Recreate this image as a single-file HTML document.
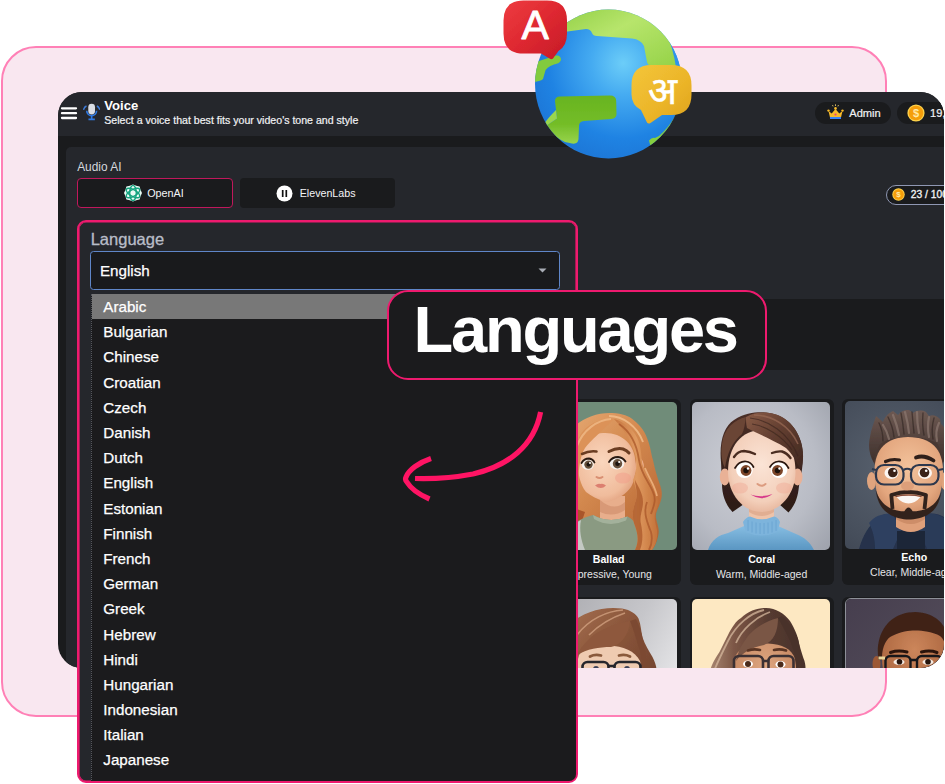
<!DOCTYPE html>
<html lang="en">
<head>
<meta charset="utf-8">
<title>Languages</title>
<style>
*{box-sizing:border-box;margin:0;padding:0}
html,body{width:945px;height:784px;overflow:hidden;background:#fff}
body{position:relative;font-family:"Liberation Sans",sans-serif;color:#fff}
.abs{position:absolute}
#pinkcard{left:.5px;top:46px;width:886.1px;height:671.2px;border:2px solid #ff80b6;border-radius:35px;background:#f9e7f0}
#win{left:58.3px;top:92.3px;width:885.4px;height:576px;border-radius:24px;background:#1a1b1d;overflow:hidden}
#hdr{left:0;top:0;width:100%;height:44px;background:#25272c}
#panel{left:7.9px;top:54.8px;width:900px;height:560px;border-radius:5px;background:#25272c}
.t{position:absolute;white-space:nowrap;line-height:1}
.pill{position:absolute;border-radius:12px;background:#1a1b1d}
.btn{position:absolute;height:30px;border-radius:4px;background:#1a1b1d}
#band{left:300px;top:151.5px;width:600px;height:71.5px;background:#1a1b1d}
.card{position:absolute;width:144px;height:186px;border-radius:6px;background:#1a1b1d}
.card .img{position:absolute;left:3px;top:3px;width:138px;height:148px;border-radius:5px;overflow:hidden}
.card .nm{position:absolute;left:0;width:100%;text-align:center;top:153.5px;font-weight:700;font-size:10.6px;line-height:12px;color:#fff}
.card .ds{position:absolute;left:-10px;right:-10px;text-align:center;top:168.5px;font-size:10.5px;line-height:12px;color:#e4e5e8;white-space:nowrap}
#lang{left:77.2px;top:220.2px;width:500.6px;height:563.2px;border:2px solid #ee1a6e;box-shadow:inset 0 0 0 .6px #ee1a6e;border-radius:9px;background:#25272c;overflow:hidden}
#sel{left:11.1px;top:28.6px;width:469.6px;height:39.5px;border:1.9px solid #5f86c8;border-radius:3.5px;background:#191a1c}
#list{left:12.1px;top:71.9px;width:490px;height:500px;background:#1b1b1d;border-left:1px dotted #55585e}
#list div{height:25.2px;line-height:25.2px;padding-left:11px;font-size:15.2px;color:#fff;white-space:nowrap;-webkit-text-stroke:.25px #fff}
#list div.hl{background:#787878}
#badge{left:387px;top:290px;width:380px;height:90px;border:2px solid #ee1a6e;border-radius:21px;background:#1b1b1d}
#badge span{position:absolute;left:24.5px;top:1.5px;font-weight:700;font-size:65px;line-height:72px;letter-spacing:-2.2px;white-space:nowrap;color:#fff}
</style>
</head>
<body>
<div id="pinkcard" class="abs"></div>

<div id="win" class="abs">
  <div id="hdr" class="abs">
    <svg class="abs" style="left:2px;top:12.700px" width="19" height="16" viewBox="0 0 19 16"><g stroke="#fff" stroke-width="2.300" stroke-linecap="round"><path d="M2 3.300h14M2 8.200h14M2 13h14"/></g></svg>
    <svg class="abs" style="left:24.300px;top:11px" width="17.300" height="19" viewBox="0 0 20 22"><path d="M.500 8q1-3.500 3.500-4.500M19.500 8q-1-3.500-3.500-4.500" stroke="#3d7bd9" stroke-width="1.700" fill="none"/><path d="M4.300 9a5.700 5.700 0 0 0 11.400 0" fill="none" stroke="#2f78e0" stroke-width="1.900"/><path d="M10 14.500v4M6.300 19h7.400" stroke="#2f78e0" stroke-width="1.900"/><rect x="6.100" y="1" width="7.800" height="12.200" rx="3.900" fill="#d9dde4"/></svg>
    <span class="t" style="left:46px;top:7px;font-size:13.1px;font-weight:700">Voice</span>
    <span class="t" style="left:46px;top:23px;font-size:10.6px;color:#f1f2f4;-webkit-text-stroke:.2px #f1f2f4">Select a voice that best fits your video's tone and style</span>
    <div class="pill" style="left:756.5px;top:10px;width:76.5px;height:22px">
      <svg class="abs" style="left:11px;top:2px" width="19" height="17" viewBox="0 0 19 17"><path d="M2.5 7l3.2 2.6L9.5 5l3.8 4.6L16.500 7l-1.6 7H4.100z" fill="#f7b928"/><path d="M4 13h11v2H4z" fill="#3b82f6"/><circle cx="9.500" cy="10.500" r="1.100" fill="#ec3f7a"/><circle cx="2.5" cy="6.6" r="1.2" fill="#f7b928"/><circle cx="9.500" cy="4.400" r="1.3" fill="#f7b928"/><circle cx="16.500" cy="6.600" r="1.200" fill="#f7b928"/><path d="M9.5 0.300v1.700M6.500 1l.6 1.400M12.500 1l-.6 1.400" stroke="#f7d774" stroke-width=".8"/></svg>
      <span class="t" style="left:34.500px;top:5.500px;font-size:11.100px;color:#f1f2f4;-webkit-text-stroke:.2px #f1f2f4">Admin</span>
    </div>
    <div class="pill" style="left:838.500px;top:10px;width:76px;height:22px">
      <svg class="abs" style="left:10.400px;top:2.100px" width="18" height="18" viewBox="0 0 18 18"><circle cx="9" cy="9" r="8.600" fill="#fcd34d"/><circle cx="9" cy="9" r="7.300" fill="#f59e0b"/><text x="9" y="13" font-size="11" font-weight="700" text-anchor="middle" fill="#ffe9a6" font-family="Liberation Sans, sans-serif">$</text></svg>
      <span class="t" style="left:33.200px;top:5.500px;font-size:11.100px;color:#f1f2f4;-webkit-text-stroke:.2px #f1f2f4">19,500</span>
    </div>
  </div>
  <div id="panel" class="abs">
    <span class="t" style="left:11px;top:15.200px;font-size:11.900px;color:#d5d8de">Audio AI</span>
    <div class="btn" style="left:11px;top:31px;width:155.500px;border:1px solid #c0185c">
      <svg class="abs" style="left:46px;top:5.200px" width="18" height="18" viewBox="0 0 18 18"><path d="M9 .5l3.200 1.200 3.400 .800 .900 3.300 1.500 3.200-1.500 3.200-.900 3.300-3.400 .800L9 17.500l-3.200-1.200-3.400-.800-.900-3.300L0 9l1.500-3.200 .900-3.300 3.400-.800z" fill="#e9faf4"/><g fill="none" stroke="#14a37f" stroke-width="1.400"><ellipse cx="9" cy="9" rx="3.300" ry="7.600"/><ellipse cx="9" cy="9" rx="3.300" ry="7.600" transform="rotate(60 9 9)"/><ellipse cx="9" cy="9" rx="3.300" ry="7.600" transform="rotate(120 9 9)"/></g></svg>
      <span class="t" style="left:69px;top:9px;font-size:10.800px;color:#f4f5f7">OpenAI</span>
    </div>
    <div class="btn" style="left:173.500px;top:31px;width:155px">
      <svg class="abs" style="left:36.500px;top:6.500px" width="17" height="17" viewBox="0 0 17 17"><circle cx="8.500" cy="8.500" r="8" fill="#fff"/><path d="M6.700 5v7M10.300 5v7" stroke="#111" stroke-width="1.700"/></svg>
      <span class="t" style="left:60px;top:9.500px;font-size:10.700px;color:#f4f5f7">ElevenLabs</span>
    </div>
    <div class="pill" style="left:820px;top:38px;width:90px;height:19.500px;border:1px solid #8f97b3;border-radius:10px;background:#1a1b1d">
      <svg class="abs" style="left:5px;top:2px" width="13" height="13" viewBox="0 0 18 18"><circle cx="9" cy="9" r="8.600" fill="#fcd34d"/><circle cx="9" cy="9" r="7.300" fill="#f59e0b"/><text x="9" y="13" font-size="11" font-weight="700" text-anchor="middle" fill="#ffe9a6" font-family="Liberation Sans, sans-serif">$</text></svg>
      <span class="t" style="left:23.500px;top:4.300px;font-size:10.300px;color:#f4f5f7;-webkit-text-stroke:.3px #f4f5f7">23 / 100</span>
    </div>
    <div id="band" class="abs"></div>
    <div id="cards">
      <!-- Ballad -->
      <div class="card" style="left:470.500px;top:252px">
        <div class="img" style="left:2.700px;top:2.500px"><svg width="138" height="148" viewBox="0 0 138 148">
          <defs>
            <linearGradient id="bh" x1="0" y1="0" x2="1" y2="1"><stop offset="0" stop-color="#eab07a"/><stop offset=".45" stop-color="#d48a50"/><stop offset="1" stop-color="#b2602f"/></linearGradient>
            <linearGradient id="bh2" x1="0" y1="0" x2="1" y2="0"><stop offset="0" stop-color="#c67640"/><stop offset=".5" stop-color="#e09a60"/><stop offset="1" stop-color="#c27038"/></linearGradient>
            <radialGradient id="bf" cx=".42" cy=".42" r=".7"><stop offset="0" stop-color="#fad6bd"/><stop offset=".7" stop-color="#f0bc9c"/><stop offset="1" stop-color="#dc9673"/></radialGradient>
            <filter id="sb"><feGaussianBlur stdDeviation="0.55"/></filter>
          </defs>
          <rect width="138" height="148" fill="#708c79"/>
          <g filter="url(#sb)">
          <!-- back hair -->
          <path d="M14 148C6 120 8 84 16 56C24 28 46 10 73 11C84 11.500 90 14 94.500 18C102 24 106 30 108 36C112 46 112 52 114 58C116 68 118 74 120 80C123 88 123.500 92 122 98C120 106 116 110 117 116C118 122 120.500 126 119.500 132C118 140 116 144 113 148z" fill="url(#bh)"/>
          <path d="M18 100C22 116 30 124 40 128L46 110z" fill="#a9572a"/>
          <!-- neck -->
          <path d="M61 94h25v24q-12 7-25 0z" fill="#e8ae8c"/>
          <path d="M61 98q14 12 25 2v8q-12 8-25 2z" fill="#d08e6c" opacity=".65"/>
          <!-- sweater -->
          <path d="M20 148C22 128 36 118 54 113Q70 122 88.500 114.500C96 118 100 126 101.500 134L103.500 148z" fill="#8a9a82"/>
          <path d="M20 148C21 134 30 124 42 118C40 128 42 138 46 148z" fill="#c3c9c3"/>
          <path d="M54 113Q70 122 88.500 114.500L87 118.500Q70 126 55 117z" fill="#a3b19b"/>
          <!-- ear -->
          <ellipse cx="100.500" cy="66" rx="4.500" ry="10" fill="#eeb08e"/>
          <!-- face -->
          <path d="M39 62C39 44 48 32 64 31C82 30 96 42 96.500 60C97 72 95 80 92 85C87 92 80 96 74 98C70 100 67 100.500 64 99C58 97 52 94 47 90C41 82 39 72 39 62z" fill="url(#bf)"/>
          <ellipse cx="84" cy="76" rx="8" ry="5.500" fill="#f19a88" opacity=".45"/>
          <!-- front hair left -->
          <path d="M75 17C62 16 48 22 42 32C36 42 32 56 30 70C29 80 26 90 22 98C30 96 36 88 39 78C40 66 41 54 46 46C52 38 62 30 75 17z" fill="#dc9258"/>
          <!-- front hair right, wavy -->
          <path d="M75 17C86 20 96 28 100 40C103 50 102 58 104 64C108 72 112 78 116 84C120 92 121 98 118 106C114 114 116 120 118 128C119 138 116 144 113 148L96 148C100 140 99 132 96 124C92 114 94 106 97 98C99 90 96 84 94 78C98 70 98 60 96 52C92 40 86 28 75 17z" fill="url(#bh2)"/>
          <path d="M96 78C100 86 104 92 104 100C104 108 100 114 102 122C104 132 104 140 101 148L96 148C100 140 99 132 96 124C92 114 94 106 97 98C99 90 96 84 96 78z" fill="#a9572a" opacity=".75"/><path d="M80 22C92 30 98 44 100 58C102 72 110 80 114 90C118 98 114 106 112 112M108 100C104 110 108 120 112 130C114 138 112 144 110 148" stroke="#a9572a" stroke-width="1.800" fill="none" opacity=".75"/><path d="M106 66C110 76 116 84 118 94" stroke="#f0b884" stroke-width="1.800" fill="none" opacity=".8"/>
          <path d="M70 14C84 14 98 24 104 40" stroke="#f2c08e" stroke-width="2" fill="none" opacity=".8"/>
          <path d="M72 17C58 18 44 28 38 44" stroke="#f2c08e" stroke-width="2" fill="none" opacity=".7"/>
          </g>
          <path d="M43 52Q50 48.500 57.500 49.500" stroke="#6b3d22" stroke-width="2.600" fill="none" stroke-linecap="round"/>
          <path d="M70 49.500Q78 45.500 84 47Q88 48.500 90 51" stroke="#6b3d22" stroke-width="3" fill="none" stroke-linecap="round"/>
          <ellipse cx="48.800" cy="62.500" rx="6" ry="5.300" fill="#f7f2ee"/><circle cx="49.500" cy="62.600" r="4.200" fill="#66503c"/><circle cx="49.500" cy="62.600" r="2" fill="#1c1410"/><circle cx="51" cy="61" r="1" fill="#fff"/>
          <ellipse cx="78" cy="61.500" rx="7.300" ry="6" fill="#f7f2ee"/><circle cx="78.500" cy="61.800" r="4.700" fill="#66503c"/><circle cx="78.500" cy="61.800" r="2.300" fill="#1c1410"/><circle cx="80.200" cy="60" r="1.100" fill="#fff"/>
          <path d="M42.500 61Q45 56.500 50 56.500Q54 57 55.500 60.500M70 60Q73 55 79 55Q84 55.500 86.500 59.500" stroke="#2a1a12" stroke-width="1.800" fill="none" stroke-linecap="round"/>
          <path d="M57.500 75q3 2 6 0" stroke="#d98f72" stroke-width="2" fill="none" stroke-linecap="round"/>
          <path d="M56 83.500Q59 81 61.500 82Q64 81 67 83.500Q62 88.500 56 83.500z" fill="#dc7f70"/>
        </svg></div>
        <div class="nm">Ballad</div><div class="ds">Expressive, Young</div>
      </div>
      <!-- Coral -->
      <div class="card" style="left:623.500px;top:252px">
        <div class="img" style="left:2.500px;top:2.500px"><svg width="138" height="148" viewBox="0 0 138 148">
          <defs>
            <radialGradient id="cb" cx=".42" cy=".45" r=".8"><stop offset="0" stop-color="#cdcfd6"/><stop offset=".6" stop-color="#b9bcc5"/><stop offset="1" stop-color="#9da1ab"/></radialGradient>
            <radialGradient id="cf" cx=".5" cy=".42" r=".65"><stop offset="0" stop-color="#fbe4d6"/><stop offset=".7" stop-color="#f3cfba"/><stop offset="1" stop-color="#e3ad92"/></radialGradient>
            <linearGradient id="ch" x1="0" y1="0" x2="1" y2="1"><stop offset="0" stop-color="#8a5c47"/><stop offset=".45" stop-color="#623e30"/><stop offset="1" stop-color="#3e2620"/></linearGradient>
            <linearGradient id="ch2" x1="0" y1="0" x2="0" y2="1"><stop offset="0" stop-color="#4a2e26"/><stop offset="1" stop-color="#2c1b17"/></linearGradient>
            <linearGradient id="cs" x1="0" y1="0" x2="0" y2="1"><stop offset="0" stop-color="#86bde2"/><stop offset="1" stop-color="#5a96c2"/></linearGradient>
          </defs>
          <rect width="138" height="148" fill="url(#cb)"/>
          <g filter="url(#sb)">
          <!-- back hair / bob -->
          <path d="M29 60C27 40 32 24 42 18C54 10 66 10 74 10.500C92 12 104 24 109 40C113 54 110 70 107 84C106 94 104 102 96.500 110.500L87 102L52 102L40.500 110C33 102 30 92 30 82z" fill="url(#ch2)"/>
          <!-- neck -->
          <path d="M57 100h25v20q-12.500 6-25 0z" fill="#eec3a9"/>
          <path d="M57 104q12.500 9 25 0v6q-12.500 8-25 0z" fill="#dba589" opacity=".7"/>
          <!-- sweater -->
          <path d="M16 148C19 138 27 133 36 131L52 124L86 124L104 132C112 135 118 140 122 148z" fill="url(#cs)"/>
          <path d="M51 120Q54 115 58 114.500Q69.500 120 82 114.500Q86 115 88 120L85.500 130Q69.500 137 53.500 130z" fill="#7db4dc"/>
          <path d="M56 118v11M60 119.500v11M64 120.500v11M68 121v11M72 121v11M76 120.500v11M80 119.500v11M84 118v11" stroke="#5f9ccb" stroke-width="1" opacity=".6"/>
          <!-- ears -->
          <ellipse cx="32.800" cy="75" rx="5" ry="8.500" fill="#e9b196"/><ellipse cx="105.500" cy="75" rx="5" ry="8.500" fill="#e9b196"/>
          <!-- face -->
          <path d="M36 70C36 44 50 28 69.500 28C90 28 103.500 44 103.500 70C103.500 92 88 110 69.500 110C51 110 36 92 36 70z" fill="url(#cf)"/>
          <ellipse cx="48" cy="86" rx="8" ry="5.500" fill="#f0a894" opacity=".45"/><ellipse cx="92" cy="86" rx="8" ry="5.500" fill="#f0a894" opacity=".45"/>
          <!-- front hair -->
          <path d="M54 15C42 18 32 26 30 42C28.500 52 30 60 33 66C35 52 40 40 50 32C52 28 53 22 54 15z" fill="#6a4434"/>
          <path d="M54 15C60 11 68 10 74 10.500C94 12 106 26 110 44C112 54 111 62 108.500 68C104 58 100 52 94 46C82 38 66 32 55 26C54 22 54 18 54 15z" fill="url(#ch)"/>
          <path d="M58 16C76 18 96 30 106 54M60 22C74 24 90 34 100 48" stroke="#3e2620" stroke-width="1.200" fill="none" opacity=".7"/>
          <path d="M62 13C80 13 98 24 106 42" stroke="#9a6b55" stroke-width="1.500" fill="none" opacity=".7"/>
          </g>
          <path d="M42 55Q46 49 52 49Q58 49.500 63 52" stroke="#4a2c20" stroke-width="2.400" fill="none" stroke-linecap="round"/>
          <path d="M80 51Q85 49 90 49.500Q95 51 98.500 56" stroke="#4a2c20" stroke-width="2.400" fill="none" stroke-linecap="round"/>
          <ellipse cx="52.500" cy="68" rx="8.300" ry="8" fill="#fff"/><circle cx="54" cy="68.500" r="5.400" fill="#7b4428"/><circle cx="54" cy="68.500" r="2.700" fill="#1c100a"/><circle cx="56" cy="66.500" r="1.200" fill="#fff"/>
          <ellipse cx="87" cy="68" rx="8.300" ry="8" fill="#fff"/><circle cx="85.500" cy="68.500" r="5.400" fill="#7b4428"/><circle cx="85.500" cy="68.500" r="2.700" fill="#1c100a"/><circle cx="87.500" cy="66.500" r="1.200" fill="#fff"/>
          <path d="M43 66Q47 59 54 59.500Q59 60 61.500 65M78 65Q81 60 86 59.500Q93 59 96.500 66" stroke="#2a1710" stroke-width="1.700" fill="none" stroke-linecap="round"/>
          <path d="M65.500 82q4 3.500 8 0" stroke="#dc9c80" stroke-width="2" fill="none" stroke-linecap="round"/>
          <path d="M58.500 92.500Q69.500 96 80.500 92Q70 100 58.500 92.500z" fill="#d63a8a"/>
        </svg></div>
        <div class="nm">Coral</div><div class="ds">Warm, Middle-aged</div>
      </div>
      <!-- Echo -->
      <div class="card" style="left:776px;top:252px">
        <div class="img" style="top:2.300px"><svg width="138" height="148" viewBox="0 0 138 148">
          <defs>
            <radialGradient id="eb" cx=".35" cy=".45" r=".9"><stop offset="0" stop-color="#59626f"/><stop offset=".6" stop-color="#464e5b"/><stop offset="1" stop-color="#363c48"/></radialGradient>
            <radialGradient id="ef" cx=".5" cy=".38" r=".7"><stop offset="0" stop-color="#f3c39c"/><stop offset=".65" stop-color="#e3a67e"/><stop offset="1" stop-color="#c4825c"/></radialGradient>
            <linearGradient id="eh" x1="0" y1="0" x2="0" y2="1"><stop offset="0" stop-color="#6e5a53"/><stop offset="1" stop-color="#3e2f2b"/></linearGradient>
          </defs>
          <rect width="138" height="148" fill="url(#eb)"/>
          <g filter="url(#sb)">
          <!-- hoodie -->
          <path d="M14 148C18 134 24 124 34 116C40 112 46 112 52 114L64 126L78 114C86 111 96 113 102 118C112 126 118 136 122 148z" fill="#25324b"/>
          <path d="M24 122C30 114 40 112 48 113L56 130L48 148L30 148C30 138 28 130 24 122z" fill="#2f4060"/>
          <path d="M104 122C98 114 90 112 82 113L74 130L82 148L100 148C100 138 100 130 104 122z" fill="#2b3a58"/>
          <path d="M52 130h28v18h-28z" fill="#1c2537"/>
          <!-- neck -->
          <path d="M51 108h29v18q-14 10-29 0z" fill="#dfa07a"/>
          <path d="M51 112q14 12 29 0v6q-14 10-29 0z" fill="#c4845f" opacity=".7"/>
          <!-- ears -->
          <ellipse cx="26.500" cy="80" rx="4.500" ry="9" fill="#e0a47e"/><ellipse cx="100" cy="80" rx="4.500" ry="9" fill="#e0a47e"/>
          <ellipse cx="63.500" cy="52" rx="36.500" ry="30" fill="#4a3833"/>
          <!-- face -->
          <path d="M29.500 70C29.500 48 42 36 63 36C86 36 98 48 98 70C98 84 95 96 90 104C84 112 74 117 63.500 117C53 117 43 112 37 104C32 96 29.500 84 29.500 70z" fill="url(#ef)"/>
          <!-- beard -->
          <path d="M30.500 88C32 100 36 108 44 113C50 117 58 118.500 63.500 118.500C70 118.500 78 117 84 113C92 108 95 100 97 88C95 97 90 103 84 106.500C78 110 70 110.500 63.500 110.500C57 110.500 50 110 44 106.500C38 103 33 97 30.500 88z" fill="#33241f"/>
          <path d="M47.500 108L46.300 94Q63.500 88 81 94L79.500 108" stroke="#33241f" stroke-width="3.800" fill="none" stroke-linejoin="round"/>
          <path d="M59 111Q63.500 102 68 111z" fill="#33241f"/>
          <path d="M51.500 96Q63.500 93.500 75.500 96Q70 102.500 63.500 102.500Q57 102.500 51.500 96z" fill="#fbf7f4"/>
          <path d="M50.500 95.500Q63.500 92.500 76.500 95.500" stroke="#6e352c" stroke-width="1.200" fill="none"/>
          <ellipse cx="62.500" cy="85" rx="6.500" ry="4.500" fill="#dd9f7a"/>
          <!-- hair -->
          <path d="M29 62C24 54 23 44 25 36C26 28 29 22 31 15L38 21C40 15 44 12 48 10L53 14C56 10 60 8.500 64 9L68 12C72 9 77 9 81 11L84 15C88 13 92 15 95 18L96 23C100 26 102 32 102 38C103 46 102 54 98 62C97 52 95 46 92 42C84 38 76 36 63 36C50 36 42 38 35 43C32 48 30 54 29 62z" fill="url(#eh)"/>
          <path d="M38 24Q42 30 44 38M48 14Q52 24 54 34M60 11Q63 22 64 32M72 11Q72 22 74 32M84 16Q82 26 84 36M94 22Q90 30 92 40" stroke="#8a766d" stroke-width="2.200" fill="none" opacity=".75" stroke-linecap="round"/>
          <path d="M34 22Q38 30 38 40M43 16Q48 26 49 36M56 12Q58 22 59 33M67 11Q68 22 69 32M78 12Q77 24 79 34M89 17Q86 28 88 38" stroke="#2f2320" stroke-width="1.400" fill="none" opacity=".6" stroke-linecap="round"/>
          </g>
          <path d="M40.500 60.500Q47 57.500 54.500 59" stroke="#2e1f1a" stroke-width="3.200" fill="none" stroke-linecap="round"/>
          <path d="M71 56.500Q79 53.500 88.500 59.500" stroke="#2e1f1a" stroke-width="3.800" fill="none" stroke-linecap="round"/>
          <ellipse cx="46.500" cy="72" rx="7" ry="6" fill="#fbf6f2"/><circle cx="47.800" cy="71.500" r="4.800" fill="#3a2218"/><circle cx="49.500" cy="69.800" r="1.300" fill="#fff"/>
          <ellipse cx="80" cy="72" rx="7" ry="6" fill="#fbf6f2"/><circle cx="79.500" cy="71.500" r="4.800" fill="#3a2218"/><circle cx="81.200" cy="69.800" r="1.300" fill="#fff"/>
          <g fill="none" stroke="#2d384d" stroke-width="2.200"><rect x="31" y="64" width="27.500" height="19.500" rx="8"/><rect x="66" y="64" width="27.500" height="19.500" rx="8"/><path d="M58.500 69Q62.300 66.500 66 69M31 69l-4-1M93.500 69l5-1"/></g>
        </svg></div>
        <div class="nm" style="top:152px">Echo</div><div class="ds" style="top:167px">Clear, Middle-aged</div>
      </div>
      <!-- row 2 -->
      <div class="card" style="left:470.500px;top:449.500px">
        <div class="img" style="left:2.700px;top:2.300px"><svg width="138" height="148" viewBox="0 0 138 148">
          <defs>
            <linearGradient id="r1b" x1="0" y1="0" x2="1" y2=".6"><stop offset="0" stop-color="#a6a6ab"/><stop offset=".6" stop-color="#c6c6ca"/><stop offset="1" stop-color="#e9e9eb"/></linearGradient>
            <linearGradient id="r1h" x1="0" y1="0" x2="1" y2="1"><stop offset="0" stop-color="#ad7654"/><stop offset=".45" stop-color="#875339"/><stop offset="1" stop-color="#603626"/></linearGradient>
          </defs>
          <rect width="138" height="148" fill="url(#r1b)"/>
          <g filter="url(#sb)">
          <path d="M8 148C2 100 8 50 30 26C44 12 66 7 83 9.500C92 11 97 15 99.500 19.500C102 26 102 32 103.500 38.500C106 46 110 52 113.500 58C116 63 117 66 117.500 70L122 148z" fill="url(#r1h)"/>
          <path d="M40 56C44 50 56 46 70 46.500C84 47 96 52 101 62C104 74 102 96 96 110C90 122 78 128 68 128C56 128 44 120 40 106C36 92 36 70 40 56z" fill="#efcbb1"/>
          <path d="M91 22C78 24 62 30 52 38C46 44 42 48 38 56C48 50 60 48 72 48C82 46 90 36 91 22z" fill="#8e593c"/>
          <path d="M91 22C96 34 98 44 101 52C103 58 104 64 104 70C108 60 106 48 103.500 38.500C102 32 100 26 97 20z" fill="#7c4a33"/>
          <path d="M84 11C68 12 50 20 38 36M86 14C74 18 60 26 50 36" stroke="#d9a888" stroke-width="1.600" fill="none" opacity=".7"/>
          </g>
          <path d="M51 57.500Q56 55 62 56.500M80 56.500Q86 55 91 57.500" stroke="#8a5a3c" stroke-width="2.800" fill="none" stroke-linecap="round"/>
          <g fill="none" stroke="#26262c" stroke-width="2.600"><rect x="43.500" y="63" width="26" height="17" rx="5"/><rect x="75.500" y="63" width="26" height="17" rx="5"/><path d="M69.500 67h6"/></g>
          <circle cx="57" cy="70" r="3" fill="#3a3f58"/><circle cx="88" cy="70" r="3" fill="#3a3f58"/>
        </svg></div>
      </div>
      <div class="card" style="left:623.500px;top:449.500px">
        <div class="img" style="left:2.500px;top:2.300px"><svg width="138" height="148" viewBox="0 0 138 148">
          <defs>
            <linearGradient id="r2h" x1="0" y1="0" x2="1" y2="0"><stop offset="0" stop-color="#b89780"/><stop offset=".3" stop-color="#7b5545"/><stop offset=".6" stop-color="#553a30"/><stop offset="1" stop-color="#46302a"/></linearGradient>
            <radialGradient id="r2f" cx=".5" cy=".3" r=".7"><stop offset="0" stop-color="#dea680"/><stop offset="1" stop-color="#bf7f5a"/></radialGradient>
          </defs>
          <rect width="138" height="148" fill="#fde8c2"/>
          <g filter="url(#sb)">
          <path d="M8 148C10 110 14 84 18.500 70C22 60 26 56 28 52C32 44 34 40 36 36C40 28 44 22 49 19C56 12 66 8.500 74 9C84 9.500 92 14 98 22C103 30 106 38 107 44C109 52 111 58 112.500 62C113.500 66 113.500 68 113.500 70L124 148z" fill="url(#r2h)"/>
          <path d="M44 56C48 48 60 44 76 44.500C90 45 100 50 103 60C106 74 104 96 98 110C92 122 82 128 73 128C62 128 50 120 45 106C41 92 40 70 44 56z" fill="url(#r2f)"/>
          <path d="M86 19C74 22 60 30 54 40C48 48 46 54 44 62C50 54 60 48 72 46C82 42 86 32 86 19z" fill="#7a5645"/>
          <path d="M86 19C92 30 98 40 102 52C104 60 104 66 104 72C110 62 108 48 106 40C102 30 96 22 90 17z" fill="#4a322a"/>
          <path d="M72 11C58 14 44 26 36 42C30 54 26 62 22 72M78 13C64 18 50 30 44 44" stroke="#d6b89e" stroke-width="1.800" fill="none" opacity=".75"/>
          </g>
          <path d="M56 51.500Q62 49.500 68 51M82 51Q88 49.500 94 51.500" stroke="#5a3524" stroke-width="2.600" fill="none" stroke-linecap="round"/>
          <ellipse cx="56" cy="65" rx="5" ry="3.500" fill="#fff"/><circle cx="56" cy="65" r="3" fill="#4a2a1a"/>
          <ellipse cx="88.500" cy="65.500" rx="5" ry="3.500" fill="#fff"/><circle cx="88.500" cy="65.500" r="3" fill="#4a2a1a"/>
          <g fill="none" stroke="#3b3033" stroke-width="2.600"><rect x="42" y="57" width="29" height="19" rx="5"/><rect x="76.500" y="57" width="25" height="19" rx="5"/><path d="M71 62h5.500"/></g>
        </svg></div>
      </div>
      <div class="card" style="left:776px;top:449.500px">
        <div class="img" style="left:2.500px;top:1.200px;border:1.200px solid #8d9098;border-radius:6px"><svg width="138" height="148" viewBox="0 0 138 148" style="position:absolute;left:-1.200px;top:-1.200px">
          <defs>
            <linearGradient id="r3b" x1="0" y1="0" x2="1" y2="1"><stop offset="0" stop-color="#463e4e"/><stop offset=".5" stop-color="#514a58"/><stop offset="1" stop-color="#453e4c"/></linearGradient>
            <radialGradient id="r3f" cx=".5" cy=".25" r=".7"><stop offset="0" stop-color="#cc865b"/><stop offset="1" stop-color="#a45f3a"/></radialGradient>
          </defs>
          <rect width="138" height="148" fill="url(#r3b)"/>
          <g filter="url(#sb)">
          <ellipse cx="31.500" cy="66" rx="4" ry="8" fill="#9c5835"/>
          <path d="M33.500 62C30 40 40 22 56 16.500C66 13 76 13.500 84 16.500C96 21 104 32 104 48L104 62z" fill="#3f2319"/>
          <path d="M37 60C37 48 42 40 47 38C56 33.500 64 32.500 70 32.500C78 32.500 88 34 95 38C100 42 102 50 102 60C102 84 90 110 70 110C50 110 37 84 37 60z" fill="url(#r3f)"/>
          </g>
          <path d="M45.500 54.500Q53 52 62 54M76.500 54Q85 52 92 54.500" stroke="#2a140c" stroke-width="3" fill="none" stroke-linecap="round"/>
          <ellipse cx="54" cy="64" rx="5.500" ry="3" fill="#f3e9e1"/><circle cx="54.500" cy="63.800" r="2.800" fill="#24130c"/>
          <ellipse cx="83" cy="64" rx="5.500" ry="3" fill="#f3e9e1"/><circle cx="83" cy="63.800" r="2.800" fill="#24130c"/>
          <g fill="none" stroke="#17171a" stroke-width="2.400"><rect x="40.500" y="58" width="25" height="18" rx="5"/><rect x="72" y="58" width="25" height="18" rx="5"/><path d="M65.500 62h6.500"/></g>
          <path d="M33.500 60h6.500" stroke="#e9d59a" stroke-width="2.800"/>
        </svg></div>
      </div>
    </div>
  </div>
</div>

<div id="lang" class="abs">
  <span class="t" style="left:11.500px;top:9.300px;font-size:16.500px;color:#b9bdc8;-webkit-text-stroke:.3px #b9bdc8">Language</span>
  <div id="sel" class="abs">
    <span class="t" style="left:8.600px;top:11.300px;font-size:15.200px;color:#fff;-webkit-text-stroke:.25px #fff">English</span>
    <svg class="abs" style="left:446.800px;top:16px" width="9" height="5" viewBox="0 0 9 5"><path d="M0.500 0.500h8L4.500 4.500z" fill="#a9adb5"/></svg>
  </div>
  <div id="list" class="abs">
    <div class="hl">Arabic</div><div>Bulgarian</div><div>Chinese</div><div>Croatian</div><div>Czech</div><div>Danish</div><div>Dutch</div><div>English</div><div>Estonian</div><div>Finnish</div><div>French</div><div>German</div><div>Greek</div><div>Hebrew</div><div>Hindi</div><div>Hungarian</div><div>Indonesian</div><div>Italian</div><div>Japanese</div><div>Korean</div>
  </div>
</div>

<div id="badge" class="abs"><span>Languages</span></div>

<svg class="abs" style="left:395px;top:400px" width="160" height="110" viewBox="395 400 160 110"><g fill="none" stroke="#ff1464" stroke-width="5.200" stroke-linecap="butt"><path d="M540.600 412C534 446 508 466 473 474C452 478 432 479 415 478.500"/><path d="M431 458.500C419 462.500 408.500 470 405.800 477.500Q405 479.500 406.500 481.500C411 489 419 494.500 429.500 499"/></g></svg>

<svg id="globe" class="abs" style="left:495px;top:0" width="205" height="165" viewBox="495 0 205 165">
  <defs>
    <radialGradient id="gsea" cx=".6" cy=".36" r=".72"><stop offset="0" stop-color="#6ccdf8"/><stop offset=".3" stop-color="#45abf1"/><stop offset=".7" stop-color="#1f83e3"/><stop offset=".92" stop-color="#1d78d8"/><stop offset="1" stop-color="#3a9be8"/></radialGradient>
    <linearGradient id="gtop" x1="0" y1="0" x2="1" y2="1"><stop offset="0" stop-color="#8ccc40"/><stop offset=".45" stop-color="#b7e56c"/><stop offset="1" stop-color="#93d145"/></linearGradient>
    <linearGradient id="gl" x1="0" y1="0" x2="0" y2="1"><stop offset="0" stop-color="#68b420"/><stop offset=".6" stop-color="#74bd28"/><stop offset="1" stop-color="#98d44c"/></linearGradient>
    <linearGradient id="gred" x1="0" y1="0" x2="1" y2="1"><stop offset="0" stop-color="#ee3c41"/><stop offset=".5" stop-color="#de2830"/><stop offset="1" stop-color="#c41a29"/></linearGradient>
    <linearGradient id="gyel" x1="0" y1="0" x2="1" y2="1"><stop offset="0" stop-color="#f4c63a"/><stop offset=".6" stop-color="#ebb428"/><stop offset="1" stop-color="#dda21c"/></linearGradient>
    <clipPath id="gclip"><ellipse cx="608.500" cy="84" rx="73.500" ry="74.500"/></clipPath>
    <filter id="gb"><feGaussianBlur stdDeviation="0.700"/></filter>
  </defs>
  <ellipse cx="608.500" cy="84" rx="73.500" ry="74.500" fill="url(#gsea)"/>
  <g clip-path="url(#gclip)" filter="url(#gb)">
    <path d="M560 32.500L586 29Q590.500 29 592 33Q593 36 597 36L632 38.500Q641 39.500 644 46L647 62Q648 66.500 654 66.500L682 68L682 40L640 0L560 0z" fill="url(#gtop)"/>
    
    <path d="M664 28Q673 46 676.500 70L690 72L690 28z" fill="#2f93ea"/>
    <path d="M530 64L556 55.500Q561 55 561 60Q560 63.500 554 64.500Q546 67 545 72L543 79Q540 82 530 82z" fill="#82cb3c"/>
    <path d="M555 101Q555 96.500 560 96.500L610 95.500Q616 95.500 616.200 101L616.500 114Q616.500 118.500 611 119L584 121Q579 121.500 579 126L578.500 139Q578 144.500 572 143.500L565 142Q552 136 546 126L557 118.500z" fill="url(#gl)"/>
    <path d="M546 126L557 118.500L556 110Q548 118 544 124z" fill="#9ad64e"/>
    <path d="M649 140.500Q652 137 655 138L659 136Q668 128 674 118Q678 110 680 104L686 120L664 148L651 148z" fill="#86cf3f"/>
  </g>
  <g filter="url(#gb)">
    <path d="M523.500 0.500H547Q567 0.500 567 20.500V33.500Q567 46 558.500 51L553 58.500Q551.500 60 549.500 58.500L541 53.500H523.500Q503.500 53.500 503.500 33.500V20.500Q503.500 0.500 523.500 0.500z" fill="url(#gred)"/>
    <path d="M651.500 65H671Q691.500 65 691.500 85.500V94.500Q691.500 115 671 115H662L650.500 123Q647.500 124.500 646.500 121.500L641 110Q631.500 105 631.500 94.500V85.500Q631.500 65 651.500 65z" fill="url(#gyel)"/>
  </g>
  <text x="535.200" y="38.600" font-family="Liberation Sans, sans-serif" font-size="41" text-anchor="middle" fill="#fff" stroke="#fff" stroke-width=".800" stroke-linejoin="round">A</text>
  <text x="662" y="103.500" font-family="Liberation Sans, sans-serif" font-size="38" text-anchor="middle" fill="#fff" stroke="#fff" stroke-width=".500">अ</text>
</svg>
</body>
</html>
